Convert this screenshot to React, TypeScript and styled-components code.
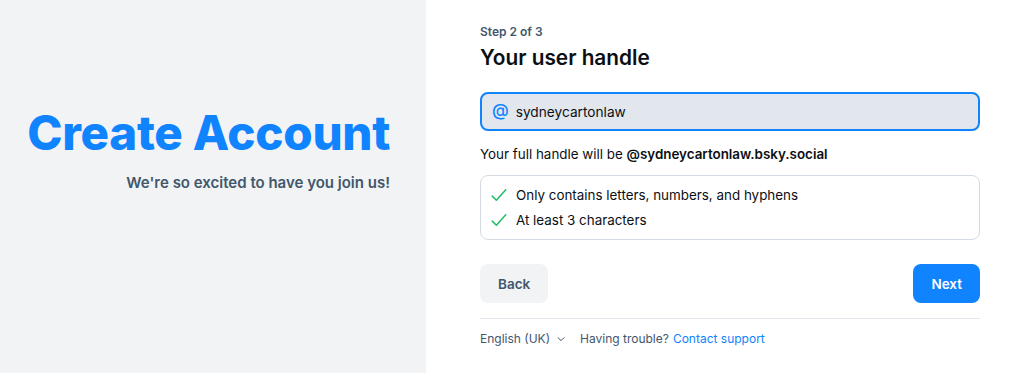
import React from "react";
import styled, { createGlobalStyle } from "styled-components";

const Global = createGlobalStyle`
  html, body { margin: 0; padding: 0; background: #ffffff; }
  body { font-family: Inter, "Noto Sans", sans-serif; -webkit-font-smoothing: antialiased; }
  * { box-sizing: border-box; }
`;

const Page = styled.div`
  display: flex;
  width: 1024px;
  height: 373px;
  overflow: hidden;
`;

const Side = styled.div`
  width: 426px;
  flex-shrink: 0;
  background: #f1f3f5;
  display: flex;
  flex-direction: column;
  align-items: flex-end;
  padding: 105px 36px 0 0;
`;

const BigTitle = styled.h1`
  margin: 0;
  font-size: 47.5px;
  line-height: 56px;
  font-weight: 800;
  color: #1083fe;
  letter-spacing: -0.3px;
`;

const Tagline = styled.p`
  margin: 12px 0 0;
  font-size: 15px;
  line-height: 20px;
  font-weight: 600;
  color: #42576c;
`;

const Main = styled.div`
  flex: 1;
  padding: 24px 0 0 54px;
`;

const Form = styled.div`
  width: 500px;
  display: flex;
  flex-direction: column;
`;

const Step = styled.div`
  font-size: 12px;
  line-height: 16px;
  font-weight: 600;
  color: #42576c;
`;

const Title = styled.h2`
  margin: 4px 0 0;
  font-size: 20.8px;
  line-height: 28px;
  font-weight: 600;
  color: #0b0f14;
`;

const InputBox = styled.div`
  margin-top: 20px;
  height: 39px;
  border: 2px solid #1083fe;
  border-radius: 8px;
  background: #e2e7ee;
  display: flex;
  align-items: center;
  gap: 7px;
  padding: 0 12px 0 10px;
`;

const At = styled.span`
  color: #1083fe;
  font-size: 17px;
  font-weight: 500;
  line-height: 1;
  margin-top: -2px;
`;

const InputText = styled.span`
  font-size: 13.7px;
  color: #0b0f14;
`;

const Hint = styled.p`
  margin: 14px 0 0;
  font-size: 13.4px;
  line-height: 18px;
  color: #0b0f14;
  b { font-weight: 600; }
`;

const Checklist = styled.div`
  margin-top: 12px;
  border: 1px solid #d4dbe2;
  border-radius: 8px;
  padding: 10px 12px 10px 9px;
  display: flex;
  flex-direction: column;
  gap: 7px;
`;

const CheckRow = styled.div`
  display: flex;
  align-items: center;
  gap: 8px;
  font-size: 13.4px;
  line-height: 18px;
  color: #0b0f14;
`;

const Buttons = styled.div`
  margin-top: 24px;
  display: flex;
  justify-content: space-between;
`;

const Button = styled.button<{ $primary?: boolean }>`
  height: 39px;
  border: none;
  border-radius: 8px;
  padding: 0 18px;
  font-family: inherit;
  font-size: 13.5px;
  font-weight: 600;
  background: ${(p) => (p.$primary ? "#1083fe" : "#f1f3f5")};
  color: ${(p) => (p.$primary ? "#ffffff" : "#42576c")};
`;

const Divider = styled.div`
  margin-top: 15px;
  height: 1px;
  background: #e2e7ee;
`;

const Footer = styled.div`
  margin-top: 11px;
  display: flex;
  align-items: center;
  font-size: 12px;
  line-height: 18px;
  color: #42576c;
`;

const Lang = styled.span`
  display: flex;
  align-items: center;
  gap: 6px;
  margin-right: 14px;
`;

const Link = styled.a`
  color: #1083fe;
  text-decoration: none;
  margin-left: 4px;
`;

const Check = () => (
  <svg width="18" height="18" viewBox="0 0 24 24" fill="none" stroke="#20bc6a" strokeWidth="2" strokeLinecap="round" strokeLinejoin="round">
    <path d="M3 13.5 L8.5 19 L21 5" />
  </svg>
);

const Chevron = () => (
  <svg width="10" height="10" viewBox="0 0 24 24" fill="none" stroke="#42576c" strokeWidth="2.4" strokeLinecap="round" strokeLinejoin="round">
    <path d="M5 9 L12 16 L19 9" />
  </svg>
);

export default function App() {
  return (
    <Page>
      <Global />
      <Side>
        <BigTitle>Create Account</BigTitle>
        <Tagline>We're so excited to have you join us!</Tagline>
      </Side>
      <Main>
        <Form>
          <Step>Step 2 of 3</Step>
          <Title>Your user handle</Title>
          <InputBox>
            <At>@</At>
            <InputText>sydneycartonlaw</InputText>
          </InputBox>
          <Hint>
            Your full handle will be <b>@sydneycartonlaw.bsky.social</b>
          </Hint>
          <Checklist>
            <CheckRow>
              <Check />
              Only contains letters, numbers, and hyphens
            </CheckRow>
            <CheckRow>
              <Check />
              At least 3 characters
            </CheckRow>
          </Checklist>
          <Buttons>
            <Button>Back</Button>
            <Button $primary>Next</Button>
          </Buttons>
          <Divider />
          <Footer>
            <Lang>
              English (UK) <Chevron />
            </Lang>
            Having trouble?<Link href="#">Contact support</Link>
          </Footer>
        </Form>
      </Main>
    </Page>
  );
}
